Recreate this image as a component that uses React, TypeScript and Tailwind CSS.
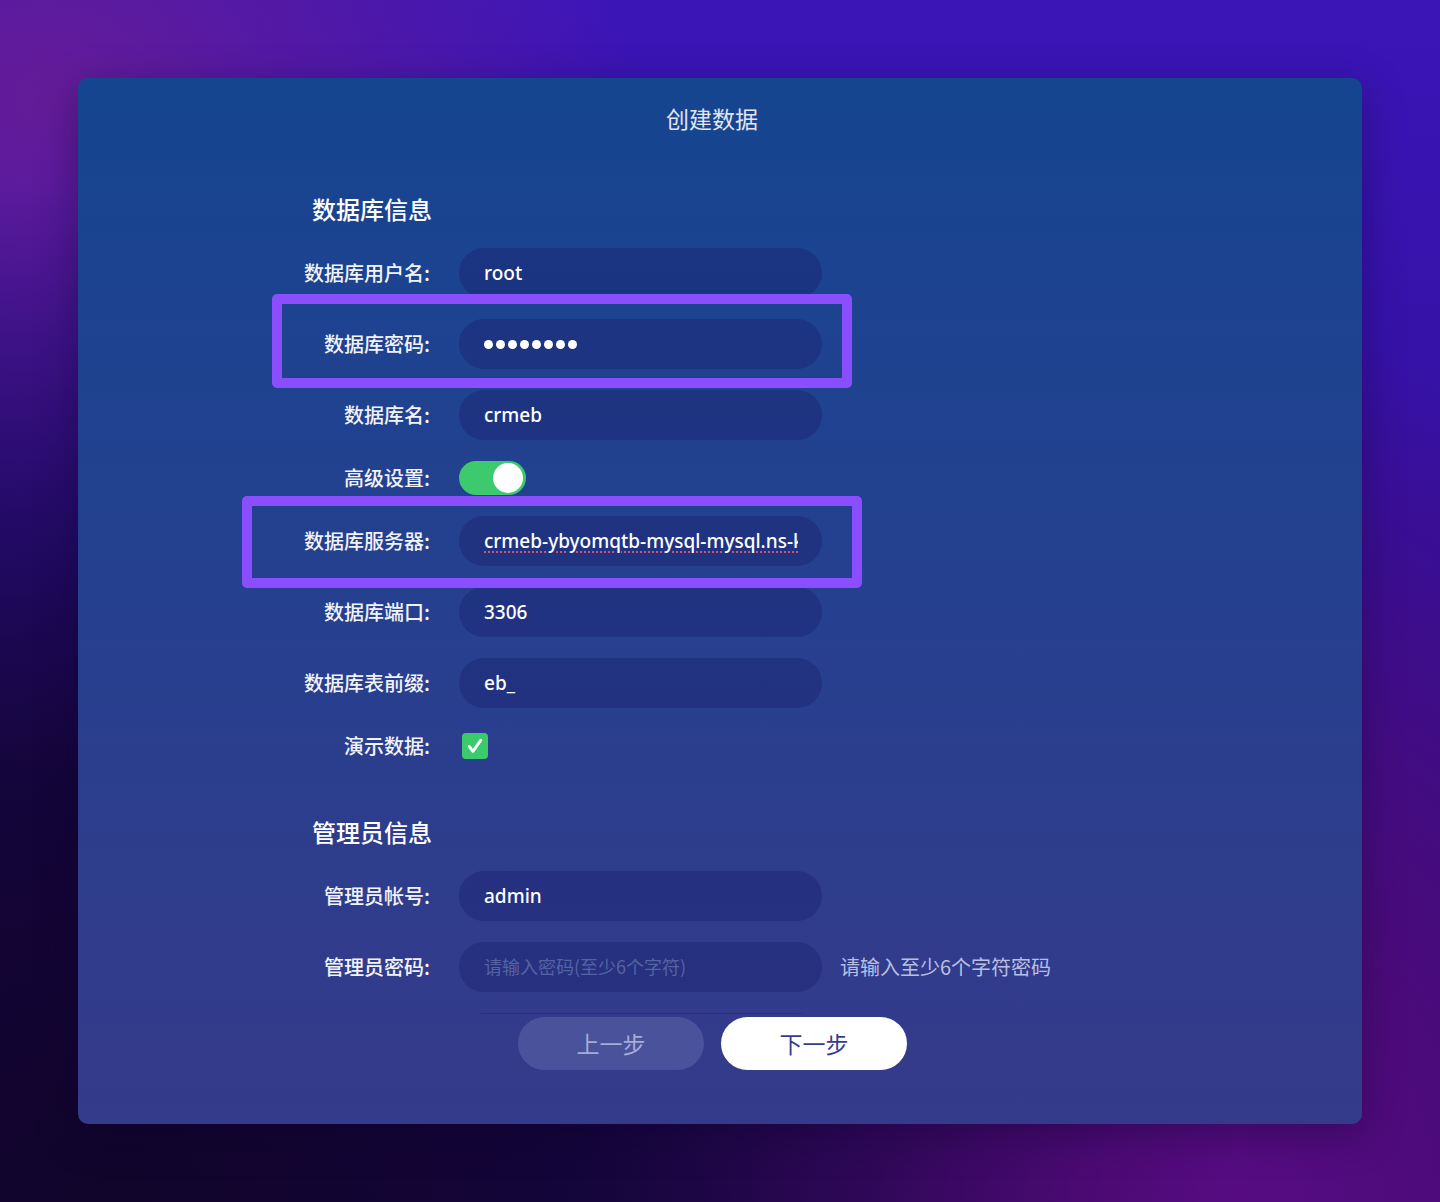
import React from 'react';

const cjk = "font-['Noto_Sans_CJK_SC','Noto_Sans',sans-serif]";
const latin = "font-['Noto_Sans','Noto_Sans_CJK_SC',sans-serif]";

interface RowProps {
    label: string;
    children: React.ReactNode;
    className?: string;
}

const Row: React.FC<RowProps> = ({ label, children, className = '' }) => (
    <div className={`flex items-center mb-[21px] ${className}`}>
        <div className={`w-[150px] shrink-0 text-right text-[20px] font-medium text-[#f2f3f8] ${cjk}`}>{label}</div>
        <div className="ml-[29px] flex items-center">{children}</div>
    </div>
);

const Field: React.FC<{ children?: React.ReactNode }> = ({ children }) => (
    <div className={`w-[363px] h-[50px] rounded-full bg-[#1a2370]/45 pl-[25px] pr-[24px] flex items-center text-[19px] font-medium text-white ${latin}`}>
        <div className="flex-1 overflow-hidden whitespace-nowrap">{children}</div>
    </div>
);

const App: React.FC = () => {
    return (
        <div className="w-full h-[1202px] overflow-hidden bg-[radial-gradient(ellipse_at_8%_100%,#11042a_0%,#14053a_25%,transparent_60%),radial-gradient(ellipse_at_75%_105%,#5e0c86_0%,#4c0b7a_25%,transparent_55%),radial-gradient(ellipse_at_3%_8%,#641c98_0%,transparent_30%),linear-gradient(to_bottom,#3c15b8_0%,#33109f_45%,#2a0c7a_100%)] pt-[78px] px-[78px]">
            <div className="relative h-[1046px] rounded-[10px] bg-gradient-to-b from-[#15458f] via-[#25408f] to-[#353a8a] shadow-[0_10px_40px_rgba(10,0,40,0.35)] pt-[25px]">
                <h1 className={`h-[30px] leading-[30px] pr-[16px] text-center text-[23px] text-[#e3e6f2] ${cjk}`}>创建数据</h1>

                <div className="mt-[41px] pt-[20px] h-[840px] overflow-hidden pl-[202px]">
                    <h2 className={`h-[30px] leading-[30px] pl-[32px] mb-[24px] text-[24px] font-medium text-white ${cjk}`}>数据库信息</h2>

                    <Row label="数据库用户名:">
                        <Field>root</Field>
                    </Row>
                    <Row label="数据库密码:">
                        <Field>
                            <div className="flex gap-[3px]">
                                {Array.from({ length: 8 }).map((_, i) => (
                                    <span key={i} className="w-[9px] h-[9px] rounded-full bg-white" />
                                ))}
                            </div>
                        </Field>
                    </Row>
                    <Row label="数据库名:">
                        <Field>crmeb</Field>
                    </Row>
                    <Row label="高级设置:">
                        <div className="w-[67px] h-[34px] rounded-full bg-[#3dca6e] flex items-center justify-end pr-[3px]">
                            <span className="w-[30px] h-[30px] rounded-full bg-white" />
                        </div>
                    </Row>
                    <Row label="数据库服务器:">
                        <Field>
                            <span className="underline decoration-dotted decoration-[#e05070] underline-offset-[4px]">crmeb-ybyomqtb-mysql-mysql.ns-kz3z1a9c.svc</span>
                        </Field>
                    </Row>
                    <Row label="数据库端口:">
                        <Field>3306</Field>
                    </Row>
                    <Row label="数据库表前缀:">
                        <Field>eb_</Field>
                    </Row>
                    <Row label="演示数据:" className="h-[34px]">
                        <div className="ml-[3px] w-[26px] h-[26px] rounded-[4px] bg-[#3ccb6c] flex items-center justify-center">
                            <svg width="20" height="20" viewBox="0 0 24 24" fill="none" stroke="white" strokeWidth="3.4" strokeLinecap="round" strokeLinejoin="round">
                                <path d="M5 12.5l4.5 6L19 5" />
                            </svg>
                        </div>
                    </Row>

                    <h2 className={`mt-[54px] h-[30px] leading-[30px] pl-[32px] mb-[24px] text-[24px] font-medium text-white ${cjk}`}>管理员信息</h2>

                    <Row label="管理员帐号:">
                        <Field>admin</Field>
                    </Row>
                    <Row label="管理员密码:">
                        <Field>
                            <span className={`text-[18px] font-normal text-[#5563a3] ${cjk}`}>请输入密码(至少6个字符)</span>
                        </Field>
                        <span className={`ml-[18px] text-[20px] text-[#b9bfe2] ${cjk}`}>请输入至少6个字符密码</span>
                    </Row>
                    <Row label="">
                        <Field />
                    </Row>
                </div>

                <div className={`mt-[3px] pl-[440px] flex gap-[17px] ${cjk}`}>
                    <button className="w-[186px] h-[53px] rounded-full bg-[#4b529c] text-[23px] text-[#a7abd5]">上一步</button>
                    <button className="w-[186px] h-[53px] rounded-full bg-white text-[23px] text-[#373d8e]">下一步</button>
                </div>

                <div className="absolute left-[194px] top-[216px] w-[580px] h-[94px] border-[10px] border-[#8a4eff] rounded-[5px]" />
                <div className="absolute left-[164px] top-[418px] w-[620px] h-[92px] border-[10px] border-[#8a4eff] rounded-[5px]" />
            </div>
        </div>
    );
};

export default App;
